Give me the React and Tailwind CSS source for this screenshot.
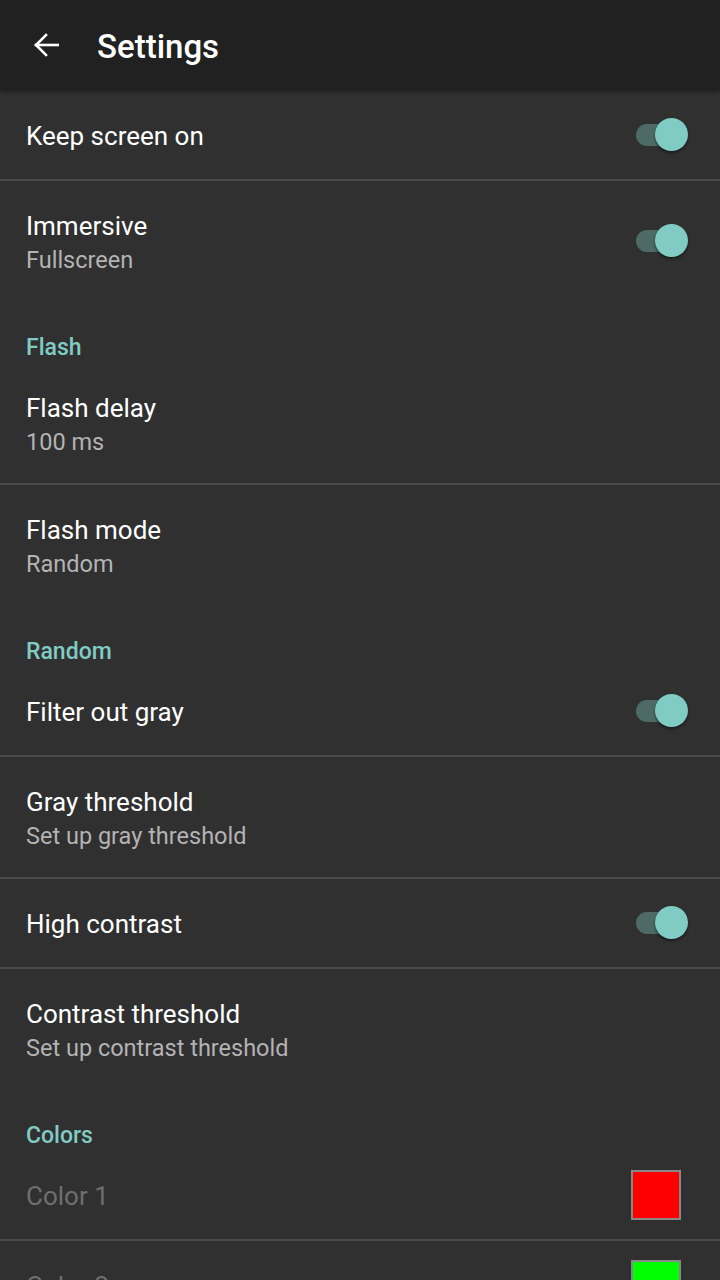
import React from 'react';

const font = { fontFamily: 'Roboto, "Noto Sans", Arial, sans-serif' };

function Switch() {
  return (
    <div className="relative w-[52px] h-[34px] mr-[32px] shrink-0">
      <div className="absolute left-0 top-[6px] w-[48px] h-[22px] rounded-full bg-[#4d6a67]" />
      <div className="absolute right-0 top-0 w-[33px] h-[33px] rounded-full bg-[#80cbc4] shadow-[0_2px_3px_rgba(0,0,0,0.45)]" />
    </div>
  );
}

function Swatch({ color }) {
  return <div className={`w-[50px] h-[50px] mr-[39px] border-2 border-[#888888] shrink-0 ${color}`} />;
}

function Divider() {
  return <div className="h-[2px] bg-[#4a4a4a]" />;
}

function Category({ title }) {
  return (
    <div className="h-[62px] pt-[33px] pl-[26px]">
      <div className="text-[23px] leading-[28px] font-medium text-[#80cbc4]">{title}</div>
    </div>
  );
}

function Row({ title, summary, right, disabled, h = 'h-[88px]' }) {
  return (
    <div className={`flex items-center justify-between pl-[26px] ${summary ? 'h-[120px]' : h}`}>
      <div className="flex flex-col pt-[2px]">
        <div className={`text-[26px] leading-[32px] ${disabled ? 'text-[#6e6e6e]' : 'text-white'}`}>{title}</div>
        {summary && <div className="mt-1 text-[23.5px] leading-[28px] text-[#b3b3b3]">{summary}</div>}
      </div>
      {right}
    </div>
  );
}

export default function App() {
  return (
    <div className="h-[1280px] overflow-hidden bg-[#303030]" style={font}>
      {/* Toolbar */}
      <div className="relative z-10 h-[90px] bg-[#212121] flex items-center pl-[33px] shadow-[0_2px_4px_rgba(0,0,0,0.35)]">
        <svg width="26" height="26" viewBox="0 0 26 26" fill="none" stroke="white" strokeWidth="2.6" strokeLinecap="square">
          <path d="M25 13H3" />
          <path d="M13 3L3 13l10 10" />
        </svg>
        <div className="ml-[38px] pt-[2px] text-[33px] font-medium text-white leading-none">Settings</div>
      </div>

      <Row title="Keep screen on" right={<Switch />} h="h-[89px]" />
      <Divider />
      <Row title="Immersive" summary="Fullscreen" right={<Switch />} />

      <Category title="Flash" />
      <Row title="Flash delay" summary="100 ms" />
      <Divider />
      <Row title="Flash mode" summary="Random" />

      <Category title="Random" />
      <Row title="Filter out gray" right={<Switch />} />
      <Divider />
      <Row title="Gray threshold" summary="Set up gray threshold" />
      <Divider />
      <Row title="High contrast" right={<Switch />} />
      <Divider />
      <Row title="Contrast threshold" summary="Set up contrast threshold" />

      <Category title="Colors" />
      <Row title="Color 1" disabled right={<Swatch color="bg-[#ff0000]" />} />
      <Divider />
      <Row title="Color 2" disabled right={<Swatch color="bg-[#00ff00]" />} />
      <Divider />
      <Row title="Color 3" disabled right={<Swatch color="bg-[#0000ff]" />} />
    </div>
  );
}
